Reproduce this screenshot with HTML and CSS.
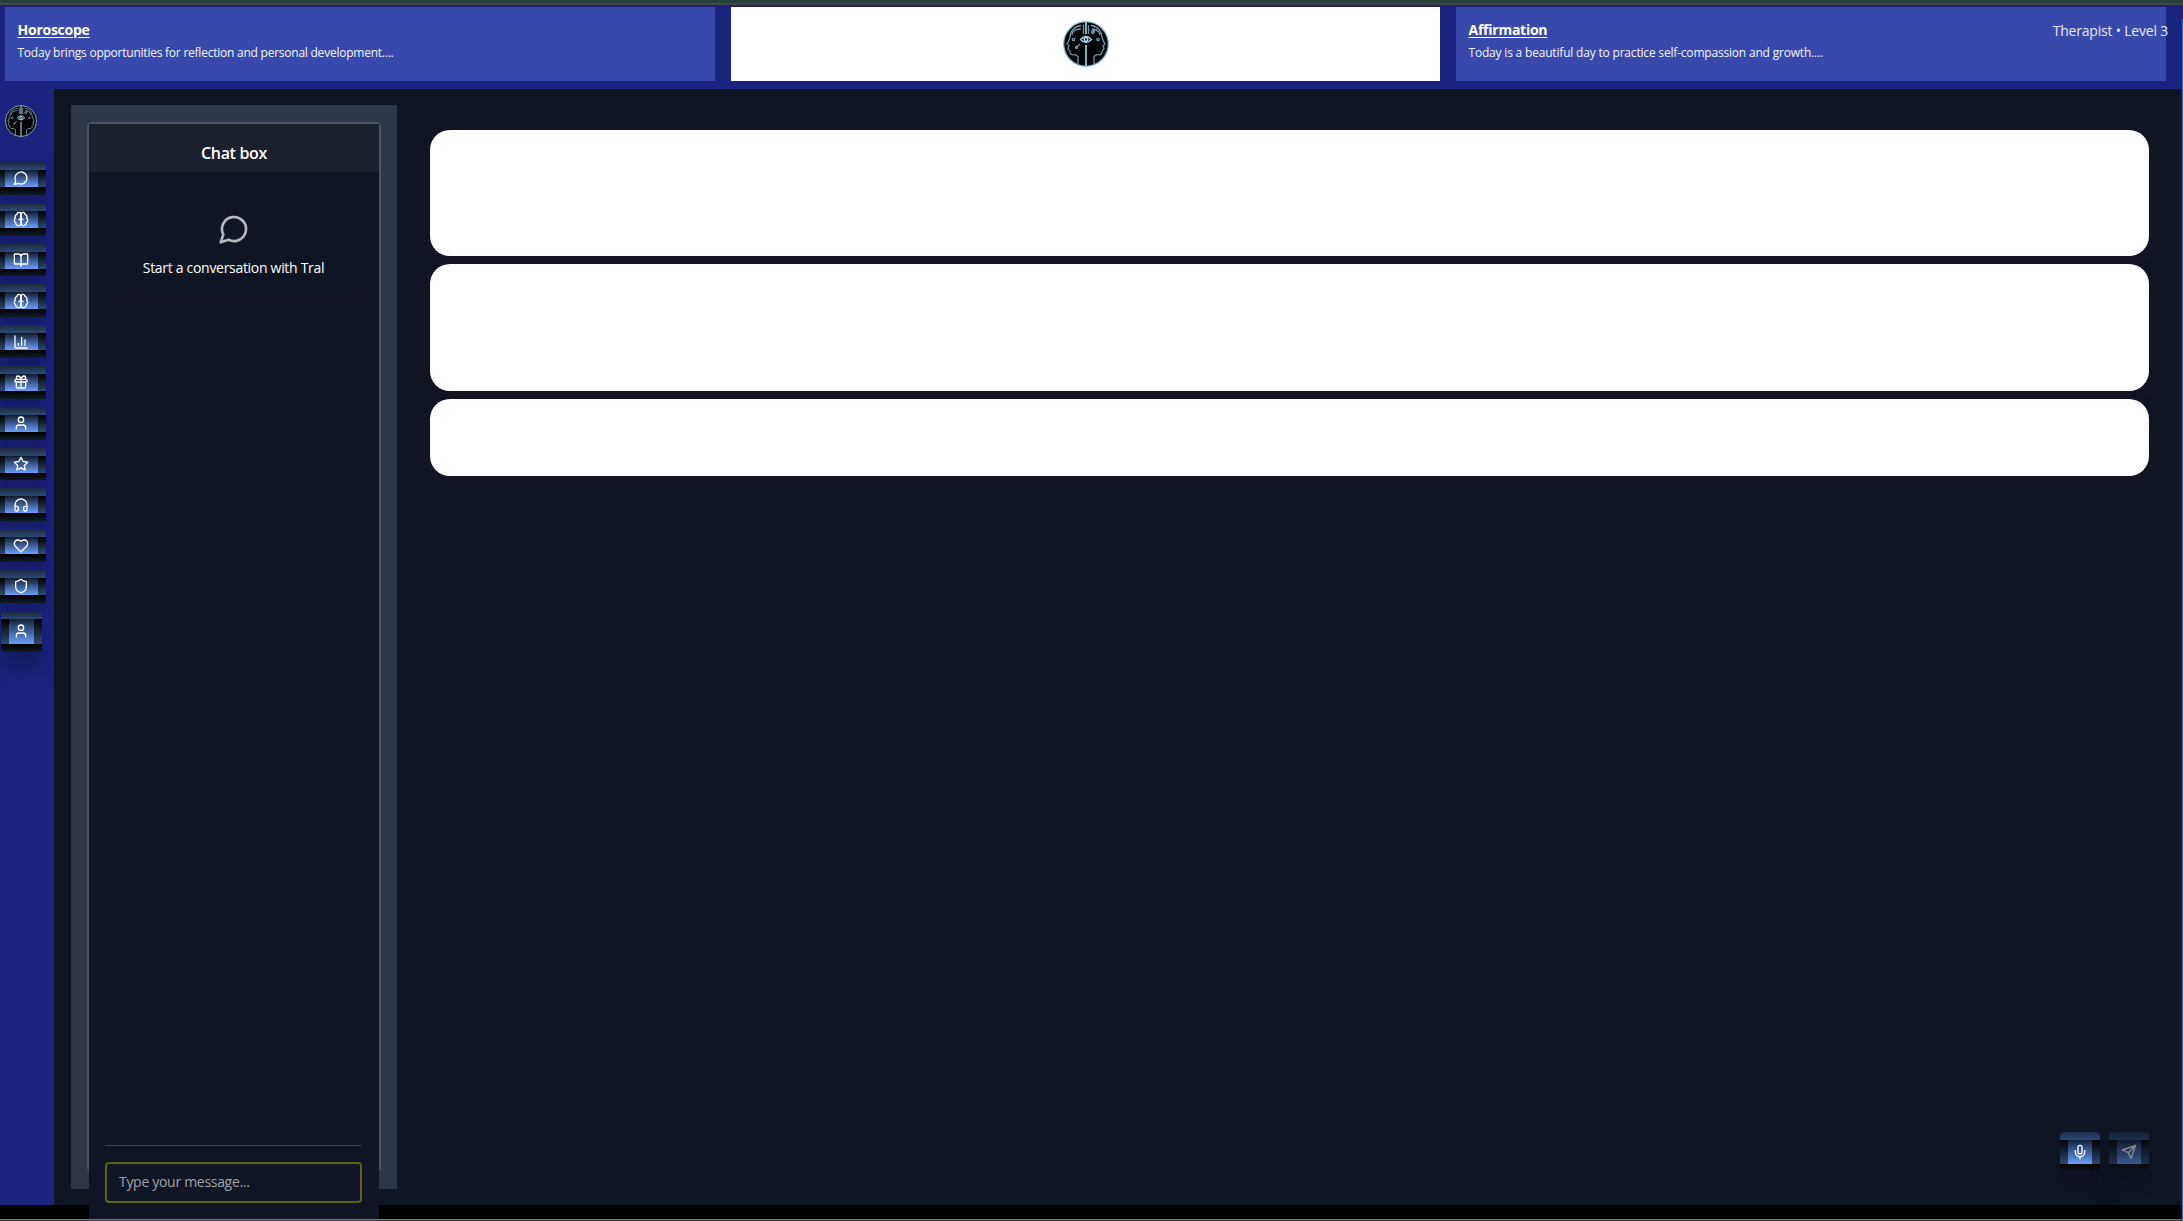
FILE: index.html
```html
<!DOCTYPE html>
<html lang="en">
<head>
<meta charset="utf-8">
<title>Tral</title>
<link rel="stylesheet" href="styles.css">
</head>
<body>
<svg class="defs" aria-hidden="true">
  <symbol id="logo" viewBox="0 0 46 46">
    <circle cx="23" cy="23" r="22.3" fill="#020406" stroke="#8bbccd" stroke-width="1.2"/>
    <g fill="none" stroke="#7099ab" stroke-width="1.3">
      <path d="M20.500 4v9M18 4.500c-7 1-11 6-11 12l-3 7 2 1-1 3 2 3c0 3 2 4 5 3l3 2v8"/>
      <path d="M25.500 4v9M28 4.500c7 1 11 6 11 12l3 7-2 1 1 3-2 3c0 3-2 4-5 3l-3 2v8"/>
      <path d="M9 14c0-4 4-6 9-6M37 14c-1-4-4-6-8-6M13 27l4-4M29 12l3-3"/>
      <circle cx="10.500" cy="18.500" r="1.200"/><circle cx="35" cy="18.500" r="1.200"/><circle cx="13.500" cy="26.500" r="1"/><circle cx="30" cy="11" r="1.500"/>
    </g>
    <path d="M23 1v12M23 24v21" stroke="#c5effa" stroke-width="1.400"/>
    <path d="M17.500 18.500q5.500-6 11 0q-5.500 6-11 0z" fill="#0b171d" stroke="#9fd3e5" stroke-width="1.300"/>
    <circle cx="23" cy="18.500" r="1.800" fill="none" stroke="#b9e8f6" stroke-width="1.300"/>
  </symbol>
  <symbol id="chat" viewBox="0 0 24 24"><path d="M7.900 20A9 9 0 1 0 4 16.100L2 22Z"/></symbol>
  <symbol id="brain" viewBox="0 0 24 24"><path d="M12 5a3 3 0 1 0-5.997.125 4 4 0 0 0-2.526 5.770 4 4 0 0 0 .556 6.588A4 4 0 1 0 12 18Z"/><path d="M12 5a3 3 0 1 1 5.997.125 4 4 0 0 1 2.526 5.770 4 4 0 0 1-.556 6.588A4 4 0 1 1 12 18Z"/><path d="M15 13a4.500 4.500 0 0 1-3-4 4.500 4.500 0 0 1-3 4"/></symbol>
  <symbol id="book" viewBox="0 0 24 24"><path d="M12 7v14M3 18a1 1 0 0 1-1-1V4a1 1 0 0 1 1-1h5a4 4 0 0 1 4 4 4 4 0 0 1 4-4h5a1 1 0 0 1 1 1v13a1 1 0 0 1-1 1h-6a3 3 0 0 0-3 3 3 3 0 0 0-3-3z"/></symbol>
  <symbol id="chart" viewBox="0 0 24 24"><path d="M3 3v16a2 2 0 0 0 2 2h16M18 17V9M13 17V5M8 17v-3"/></symbol>
  <symbol id="gift" viewBox="0 0 24 24"><rect x="3" y="8" width="18" height="4" rx="1"/><path d="M12 8v13M19 12v7a2 2 0 0 1-2 2H7a2 2 0 0 1-2-2v-7M7.500 8a2.500 2.500 0 0 1 0-5A4.800 8 0 0 1 12 8a4.800 8 0 0 1 4.500-5 2.500 2.500 0 0 1 0 5"/></symbol>
  <symbol id="user" viewBox="0 0 24 24"><path d="M19 21v-2a4 4 0 0 0-4-4H9a4 4 0 0 0-4 4v2"/><circle cx="12" cy="7" r="4"/></symbol>
  <symbol id="star" viewBox="0 0 24 24"><path d="M12 2l3.090 6.260L22 9.270l-5 4.870 1.180 6.880L12 17.770l-6.180 3.250L7 14.140 2 9.270l6.910-1.010z"/></symbol>
  <symbol id="headphones" viewBox="0 0 24 24"><path d="M3 14h3a2 2 0 0 1 2 2v3a2 2 0 0 1-2 2H5a2 2 0 0 1-2-2v-7a9 9 0 0 1 18 0v7a2 2 0 0 1-2 2h-1a2 2 0 0 1-2-2v-3a2 2 0 0 1 2-2h3"/></symbol>
  <symbol id="heart" viewBox="0 0 24 24"><path d="M19 14c1.490-1.460 3-3.210 3-5.500A5.500 5.500 0 0 0 16.500 3c-1.760 0-3 .5-4.500 2-1.500-1.500-2.740-2-4.500-2A5.500 5.500 0 0 0 2 8.500c0 2.300 1.500 4.050 3 5.500l7 7Z"/></symbol>
  <symbol id="shield" viewBox="0 0 24 24"><path d="M20 13c0 5-3.500 7.500-7.660 8.950a1 1 0 0 1-.67-.01C7.500 20.500 4 18 4 13V6a1 1 0 0 1 1-1c2 0 4.500-1.200 6.240-2.720a1.170 1.170 0 0 1 1.520 0C14.510 3.810 17 5 19 5a1 1 0 0 1 1 1z"/></symbol>
  <symbol id="mic" viewBox="0 0 24 24"><rect x="9" y="2" width="6" height="13" rx="3"/><path d="M19 10v2a7 7 0 0 1-14 0v-2M12 19v3"/></symbol>
  <symbol id="send" viewBox="0 0 24 24"><path d="M22 2L15 22l-4-9-9-4zM22 2L11 13"/></symbol>
</svg>

<div class="edge-top"></div>
<header class="header">
  <section class="info">
    <h2 class="info-title">Horoscope</h2>
    <p class="info-text">Today brings opportunities for reflection and personal development....</p>
  </section>
  <section class="brand"><svg class="brand-logo"><use href="#logo"/></svg></section>
  <section class="info">
    <h2 class="info-title">Affirmation</h2>
    <p class="info-text affirmation">Today is a beautiful day to practice self-compassion and growth....</p>
    <span class="level">Therapist • Level 3</span>
  </section>
</header>

<div class="shell">
  <nav class="sidebar">
    <svg class="side-logo"><use href="#logo"/></svg>
    <div class="nav">
      <button class="nav-btn"><svg class="icon"><use href="#chat"/></svg></button>
      <button class="nav-btn"><svg class="icon"><use href="#brain"/></svg></button>
      <button class="nav-btn"><svg class="icon"><use href="#book"/></svg></button>
      <button class="nav-btn"><svg class="icon"><use href="#brain"/></svg></button>
      <button class="nav-btn"><svg class="icon"><use href="#chart"/></svg></button>
      <button class="nav-btn"><svg class="icon"><use href="#gift"/></svg></button>
      <button class="nav-btn"><svg class="icon"><use href="#user"/></svg></button>
      <button class="nav-btn"><svg class="icon"><use href="#star"/></svg></button>
      <button class="nav-btn"><svg class="icon"><use href="#headphones"/></svg></button>
      <button class="nav-btn"><svg class="icon"><use href="#heart"/></svg></button>
      <button class="nav-btn"><svg class="icon"><use href="#shield"/></svg></button>
    </div>
    <button class="square-btn profile"><svg class="icon"><use href="#user"/></svg></button>
  </nav>

  <aside class="panel">
    <div class="chat">
      <h1 class="chat-title">Chat box</h1>
      <div class="messages">
        <div class="empty">
          <svg class="empty-icon"><use href="#chat"/></svg>
          <p class="empty-text">Start a conversation with Tral</p>
        </div>
      </div>
      <div class="composer">
        <input class="message" type="text" placeholder="Type your message...">
      </div>
    </div>
  </aside>

  <main class="main">
    <div class="card"></div>
    <div class="card"></div>
    <div class="card card-small"></div>
    <div class="actions">
      <button class="square-btn action"><svg class="icon"><use href="#mic"/></svg></button>
      <button class="square-btn action off"><svg class="icon"><use href="#send"/></svg></button>
    </div>
  </main>
</div>
<div class="edge-right"></div>
<div class="edge-bottom"></div>
</body>
</html>
```
FILE: styles.css
```css
* { box-sizing: border-box; }
html { height: 100%; overflow: hidden; }
body {
  margin: 0;
  height: 1221px;
  overflow: hidden;
  display: flex;
  flex-direction: column;
  background: #000;
  color: #fff;
  font-family: "Open Sans", "Noto Sans", sans-serif;
  position: relative;
}
h1, h2, p { margin: 0; }
.defs { position: absolute; width: 0; height: 0; }
.edge-top { flex: 0 0 5px; background: #28403a; border-bottom: 2px solid #444645; }
.edge-right { position: absolute; right: 0; top: 19px; bottom: 2px; width: 1px; background: #0b7fdd; }
.edge-bottom { position: absolute; left: 0; right: 0; bottom: 0; height: 2px; background: #3c3c3c; border-top: 1px solid #777375; }

.header {
  flex: 0 0 84px;
  display: grid;
  grid-template-columns: 710px 709px 710px;
  gap: 16px;
  padding: 2px 0 8px 5px;
  background: #1a237e;
}
.info { position: relative; background: #3949ab; padding: 13px 12.5px; }
.info-title { width: max-content; font-size: 14px; line-height: 20px; font-weight: 700; letter-spacing: -0.25px; text-decoration: underline; text-underline-offset: 2px; }
.info-text { width: max-content; margin-top: 4px; font-size: 12px; line-height: 18px; letter-spacing: -0.235px; color: #f4f5fb; white-space: nowrap; }
.affirmation { letter-spacing: -0.19px; }
.level { position: absolute; right: -2px; top: 14px; font-size: 14px; line-height: 20px; white-space: nowrap; color: #e8eaf6; letter-spacing: -0.2px; }
.brand { background: #fff; display: flex; justify-content: center; align-items: center; }
.brand-logo { width: 46px; height: 46px; }

.shell { flex: 0 0 1116px; display: flex; background: #0f1523; }
.sidebar { width: 54px; background: #1a237e; padding-top: 16px; }
.side-logo { display: block; width: 32px; height: 32px; margin-left: 5px; }
.nav { display: flex; flex-direction: column; gap: 8px; margin-top: 25px; }
.icon { display: block; width: 16px; height: 16px; flex: none; fill: none; stroke: #fff; stroke-width: 2; stroke-linecap: round; stroke-linejoin: round; }
button { border: 0; padding: 0; display: flex; color: #fff; align-items: center; justify-content: center; }
.nav-btn {
  width: 46px;
  height: 32.8px;
  padding-right: 4px;
  background:
    linear-gradient(#10192e, #6b9ffb) 5px 8px / 33px 17px no-repeat,
    linear-gradient(#1b2740, #2c4a73) 0 0 / 100% 8px no-repeat,
    linear-gradient(#000, #2c4a73) 0 8px / 100% 17px no-repeat,
    linear-gradient(#000, #101d2a) 0 25px / 100% 8px no-repeat;
  box-shadow: 0 8px 14px rgba(10, 10, 40, .3);
}
.square-btn { box-shadow: 0 20px 18px rgba(10, 10, 35, .28); border-radius: 4px; }
.profile {
  width: 41px;
  height: 41px;
  margin: 8px 0 0 1px;
  padding-right: 1px;
  background:
    linear-gradient(#14213c, #6b9ffb) 8px 8px / 25px 25px no-repeat,
    linear-gradient(#1b2740, #2c4a73) 0 0 / 100% 8px no-repeat,
    linear-gradient(#000, #2c4a73) 0 8px / 100% 25px no-repeat,
    linear-gradient(#000, #101d2a) 0 33px / 100% 8px no-repeat;
}

.panel { width: 326px; height: 1084px; margin: 16px 0 0 17px; padding: 17px 16px; background: #2d3748; }
.chat { width: 294px; height: 1050px; border: 2px solid #4a5568; border-radius: 5px; background: #0f1523; display: flex; flex-direction: column; }
.chat-title { flex: 0 0 48px; padding-top: 17px; background: #1a202c; text-align: center; font-size: 16px; line-height: 24px; font-weight: 600; letter-spacing: -0.32px; }
.messages { flex: 0 0 973px; padding: 24px 16px; }
.empty { width: 257px; height: 100px; border-radius: 20px; display: flex; flex-direction: column; align-items: center; padding-top: 17px; box-shadow: 0 6px 10px -2px rgba(70, 20, 35, .22); }
.empty-icon { width: 32px; height: 32px; fill: none; stroke: #b6b7bd; stroke-width: 2; stroke-linecap: round; stroke-linejoin: round; }
.empty-text { margin-top: 13px; font-size: 14px; line-height: 20px; letter-spacing: -0.3px; white-space: nowrap; }
.composer { flex: 0 0 74px; background: #0f1523; padding: 0 16px; }
.composer::before { content: ""; display: block; height: 1px; width: 257px; background: #3c4353; margin-bottom: 16px; }
.message { display: block; width: 257px; height: 41px; padding: 0 12px 2px; border: 2px solid #5c6217; border-radius: 4px; background: #0f1523; color: #fff; font: 14px "Open Sans", "Noto Sans", sans-serif; letter-spacing: -0.3px; }
.message::placeholder { color: #a0a3aa; opacity: 1; }

.main { flex: 1; display: flex; flex-direction: column; gap: 8px; padding: 41px 34px 41px 33px; }
.card { flex: 0 0 126px; border-radius: 20px; background: #fff; box-shadow: 0 4px 14px rgba(70, 20, 45, .24); }
.card + .card { flex-basis: 127px; }
.card + .card-small { flex-basis: 77px; }
.actions { display: flex; justify-content: flex-end; gap: 9px; margin-top: auto; }
.action {
  width: 40px;
  height: 40px;
  margin-bottom: -8px;
  background:
    linear-gradient(#14213c, #6b9ffb) 8px 8px / 24px 24px no-repeat,
    linear-gradient(#1d2c48, #2c4a73) 0 0 / 100% 8px no-repeat,
    linear-gradient(#000, #2c4a73) 0 8px / 100% 24px no-repeat,
    linear-gradient(#000, #0f1523) 0 32px / 100% 8px no-repeat;
}
.off { opacity: .5; }
```
